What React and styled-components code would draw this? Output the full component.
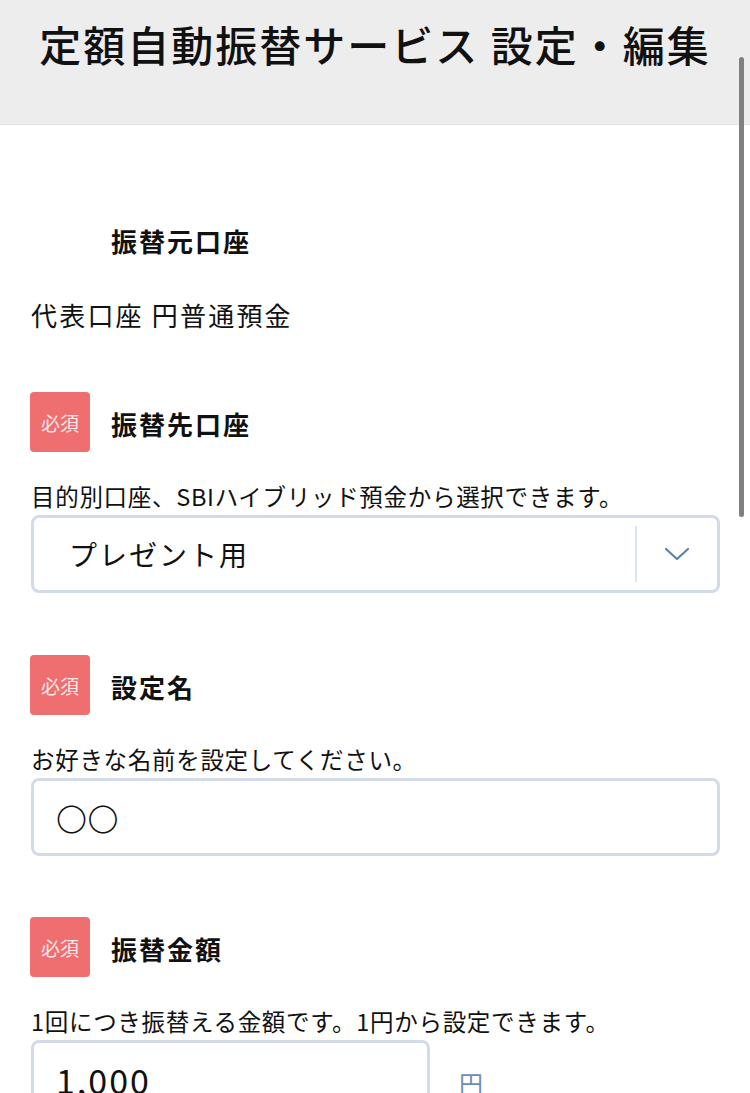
import React from 'react';
import styled, { createGlobalStyle } from 'styled-components';

const GlobalStyle = createGlobalStyle`
  html, body {
    margin: 0;
    padding: 0;
    background: #fff;
  }
  body {
    font-family: "Noto Sans CJK JP", "Noto Sans", sans-serif;
    color: #111;
  }
`;

const Page = styled.div`
  position: relative;
  width: 750px;
  height: 1093px;
  overflow: hidden;
`;

const Header = styled.header`
  height: 125px;
  box-sizing: border-box;
  padding-top: 16px;
  background: #ededed;
  border-bottom: 1px solid #e2e2e2;
  text-align: center;
  h1 {
    margin: 0;
    font-size: 42px;
    line-height: 56px;
    font-weight: 500;
    letter-spacing: 2px;
    color: #111;
  }
`;

const ScrollBar = styled.div`
  position: absolute;
  top: 57px;
  right: 6px;
  width: 5px;
  height: 460px;
  border-radius: 3px;
  background: #808080;
`;

const Main = styled.main`
  padding: 84px 31px 0 31px;
`;

const Section = styled.section`
  margin-top: ${(p) => p.$gap || 60}px;
  &:first-child {
    margin-top: 0;
  }
`;

const LabelRow = styled.div`
  display: flex;
  align-items: center;
  gap: 21px;
  height: 60px;
  margin-left: -1px;
`;

const Badge = styled.span`
  display: flex;
  align-items: center;
  justify-content: center;
  width: 60px;
  height: 60px;
  border-radius: 4px;
  background: ${(p) => (p.$blank ? 'transparent' : '#ef6e6f')};
  color: #fde9ea;
  font-size: 19px;
  letter-spacing: 0;
`;

const Heading = styled.h2`
  margin: 3px 0 0;
  font-size: 26px;
  font-weight: 700;
  letter-spacing: 2px;
`;

const Value = styled.p`
  margin: 26px 0 0;
  font-size: 26px;
  line-height: 40px;
  letter-spacing: 2.2px;
`;

const Note = styled.p`
  margin: 26px 0 0;
  font-size: 23.5px;
  line-height: 36px;
  letter-spacing: 0.7px;
`;

const Box = styled.div`
  box-sizing: border-box;
  display: flex;
  align-items: center;
  width: ${(p) => p.$width || 689}px;
  height: 78px;
  margin-top: 1px;
  border: 3px solid #d3dbe8;
  border-radius: 8px;
  background: #fff;
`;

const SelectText = styled.span`
  flex: 1;
  padding-left: 35px;
  font-size: 28px;
  letter-spacing: 2px;
`;

const Divider = styled.span`
  align-self: stretch;
  width: 2px;
  margin: 8px 0;
  background: #dde3ed;
`;

const Chevron = styled.span`
  display: flex;
  align-items: center;
  justify-content: center;
  width: 80px;
  color: #5a82ab;
`;

const InputText = styled.span`
  padding-left: 22px;
  font-size: ${(p) => p.$size || 28}px;
  font-weight: ${(p) => p.$weight || 400};
  letter-spacing: ${(p) => p.$spacing || 0.5}px;
`;

const AmountRow = styled.div`
  display: flex;
  align-items: center;
  gap: 29px;
`;

const Unit = styled.span`
  margin-top: 8px;
  font-size: 24px;
  color: #6c8cb0;
`;

export default function App() {
  return (
    <Page>
      <GlobalStyle />
      <Header>
        <h1>定額自動振替サービス 設定・編集</h1>
      </Header>
      <ScrollBar />
      <Main>
        <Section>
          <LabelRow>
            <Badge $blank />
            <Heading>振替元口座</Heading>
          </LabelRow>
          <Value>代表口座 円普通預金</Value>
        </Section>

        <Section $gap={57}>
          <LabelRow>
            <Badge>必須</Badge>
            <Heading>振替先口座</Heading>
          </LabelRow>
          <Note>目的別口座、SBIハイブリッド預金から選択できます。</Note>
          <Box>
            <SelectText>プレゼント用</SelectText>
            <Divider />
            <Chevron>
              <svg width="26" height="16" viewBox="0 0 26 16" fill="none">
                <path d="M2 3 L13 13 L24 3" stroke="currentColor" strokeWidth="2.2" strokeLinecap="round" strokeLinejoin="round" />
              </svg>
            </Chevron>
          </Box>
        </Section>

        <Section $gap={62}>
          <LabelRow>
            <Badge>必須</Badge>
            <Heading>設定名</Heading>
          </LabelRow>
          <Note>お好きな名前を設定してください。</Note>
          <Box>
            <InputText $size={31} $weight={300}>〇〇</InputText>
          </Box>
        </Section>

        <Section $gap={61}>
          <LabelRow>
            <Badge>必須</Badge>
            <Heading>振替金額</Heading>
          </LabelRow>
          <Note>1回につき振替える金額です。1円から設定できます。</Note>
          <AmountRow>
            <Box $width={399}>
              <InputText $size={34} $spacing={2}>1,000</InputText>
            </Box>
            <Unit>円</Unit>
          </AmountRow>
        </Section>
      </Main>
    </Page>
  );
}
